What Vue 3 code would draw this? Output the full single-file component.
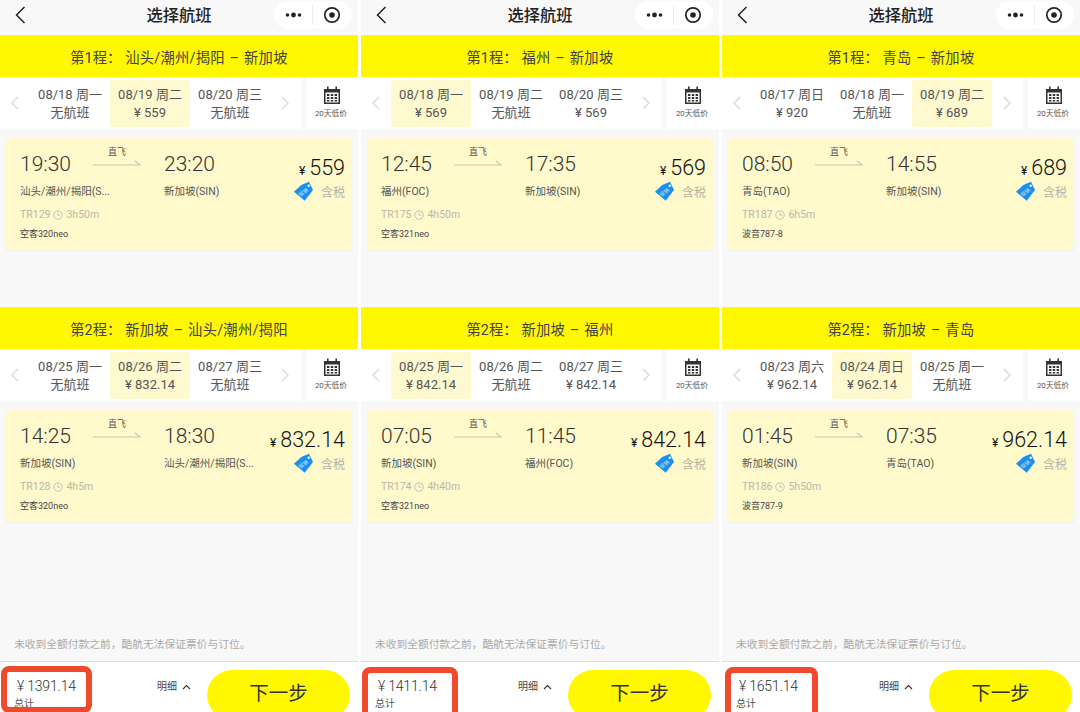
<script setup>
const phones = [
  {
    total: '1391.14', mark: { left: '1px', top: '4px', width: '91px', height: '47px' },
    legs: [
      { n: 1, route: '汕头/潮州/揭阳 – 新加坡', sel: 1,
        days: [['08/18 周一','无航班'],['08/19 周二','¥ 559'],['08/20 周三','无航班']],
        dep: '19:30', arr: '23:20', from: '汕头/潮州/揭阳(S...', to: '新加坡(SIN)', price: '559', fn: 'TR129', dur: '3h50m', plane: '空客320neo' },
      { n: 2, route: '新加坡 – 汕头/潮州/揭阳', sel: 1,
        days: [['08/25 周一','无航班'],['08/26 周二','¥ 832.14'],['08/27 周三','无航班']],
        dep: '14:25', arr: '18:30', from: '新加坡(SIN)', to: '汕头/潮州/揭阳(S...', price: '832.14', fn: 'TR128', dur: '4h5m', plane: '空客320neo' }
    ]
  },
  {
    total: '1411.14', mark: { left: '1px', top: '5px', width: '96px', height: '60px' },
    legs: [
      { n: 1, route: '福州 – 新加坡', sel: 0,
        days: [['08/18 周一','¥ 569'],['08/19 周二','无航班'],['08/20 周三','¥ 569']],
        dep: '12:45', arr: '17:35', from: '福州(FOC)', to: '新加坡(SIN)', price: '569', fn: 'TR175', dur: '4h50m', plane: '空客321neo' },
      { n: 2, route: '新加坡 – 福州', sel: 0,
        days: [['08/25 周一','¥ 842.14'],['08/26 周二','无航班'],['08/27 周三','¥ 842.14']],
        dep: '07:05', arr: '11:45', from: '新加坡(SIN)', to: '福州(FOC)', price: '842.14', fn: 'TR174', dur: '4h40m', plane: '空客321neo' }
    ]
  },
  {
    total: '1651.14', mark: { left: '3px', top: '5px', width: '93px', height: '60px' },
    legs: [
      { n: 1, route: '青岛 – 新加坡', sel: 2,
        days: [['08/17 周日','¥ 920'],['08/18 周一','无航班'],['08/19 周二','¥ 689']],
        dep: '08:50', arr: '14:55', from: '青岛(TAO)', to: '新加坡(SIN)', price: '689', fn: 'TR187', dur: '6h5m', plane: '波音787-8' },
      { n: 2, route: '新加坡 – 青岛', sel: 1,
        days: [['08/23 周六','¥ 962.14'],['08/24 周日','¥ 962.14'],['08/25 周一','无航班']],
        dep: '01:45', arr: '07:35', from: '新加坡(SIN)', to: '青岛(TAO)', price: '962.14', fn: 'TR186', dur: '5h50m', plane: '波音787-9' }
    ]
  }
]
</script>

<template>
  <div class="page">
    <div v-for="(p, pi) in phones" :key="pi" class="phone">
      <header class="nav">
        <svg class="back" width="12" height="20" viewBox="0 0 12 20"><path d="M10.500 2 2.500 10l8 8" fill="none" stroke="#222" stroke-width="1.500"/></svg>
        <div class="title">选择航班</div>
        <div class="capsule">
          <svg width="17" height="8" viewBox="0 0 17 8"><circle cx="2.500" cy="4" r="1.800" fill="#222"/><circle cx="8.500" cy="4" r="2.400" fill="#222"/><circle cx="14.500" cy="4" r="1.800" fill="#222"/></svg>
          <span class="cap-sep"></span>
          <svg width="18" height="18" viewBox="0 0 18 18"><circle cx="9" cy="9" r="7.200" fill="none" stroke="#222" stroke-width="1.700"/><circle cx="9" cy="9" r="2.800" fill="#222"/></svg>
        </div>
      </header>

      <section v-for="leg in p.legs" :key="leg.n" class="leg">
        <div class="banner"><span class="b-label">第{{ leg.n }}程：</span><span class="b-route">{{ leg.route }}</span></div>
        <div class="strip">
          <div class="dates">
            <svg class="chev" width="10" height="16" viewBox="0 0 10 16"><path d="M8 2 2 8l6 6" fill="none" stroke="#ddd" stroke-width="1.500"/></svg>
            <div class="day-row">
              <div v-for="(d, i) in leg.days" :key="i" class="day" :class="{ on: i === leg.sel }">
                <div>{{ d[0] }}</div>
                <div>{{ d[1] }}</div>
              </div>
            </div>
            <svg class="chev" width="10" height="16" viewBox="0 0 10 16"><path d="M2 2l6 6-6 6" fill="none" stroke="#ddd" stroke-width="1.500"/></svg>
          </div>
          <div class="cal">
            <svg width="18" height="18" viewBox="0 0 18 18">
              <path d="M1 3h16v15H1z" fill="#333"/>
              <rect x="4" y="0.500" width="1.600" height="4" fill="#333"/><rect x="12.400" y="0.500" width="1.600" height="4" fill="#333"/>
              <path d="M2.500 6.500h13v10h-13z" fill="#fff"/>
              <path d="M4 8h2.400v2H4zM7.800 8h2.400v2H7.800zM11.600 8H14v2h-2.400zM4 11h2.400v2H4zM7.800 11h2.400v2H7.800zM11.600 11H14v2h-2.400zM4 14h2.400v1.500H4zM7.800 14h2.400v1.500H7.800zM11.600 14H14v1.500h-2.400z" fill="#333"/>
            </svg>
            <div class="cal-t">20天低价</div>
          </div>
        </div>
        <div class="body">
          <div class="card">
            <div class="left">
              <div class="times">
                <span class="time dep">{{ leg.dep }}</span>
                <span class="direct">
                  <span class="direct-t">直飞</span>
                  <svg width="48" height="6" viewBox="0 0 48 6"><path d="M0 5h47L42 1" fill="none" stroke="#c9c6b4" stroke-width="1.200"/></svg>
                </span>
                <span class="time">{{ leg.arr }}</span>
              </div>
              <div class="cities"><span class="city">{{ leg.from }}</span><span class="city to">{{ leg.to }}</span></div>
              <div class="fn">
                {{ leg.fn }}
                <svg width="10" height="10" viewBox="0 0 9 9"><circle cx="4.500" cy="4.500" r="3.800" fill="none" stroke="#bbb" stroke-width=".8"/><path d="M4.500 2.300v2.400h1.800" fill="none" stroke="#bbb" stroke-width=".8"/></svg>
                {{ leg.dur }}
              </div>
              <div class="plane">{{ leg.plane }}</div>
            </div>
            <div class="right">
              <div class="price"><span class="yen">¥</span>{{ leg.price }}</div>
              <div class="tax">
                <svg width="19" height="20" viewBox="0 0 19 20">
                  <path d="M7.300 4 15 .7 19 9 10.700 19.700 0 10.700z" fill="#1a8fee"/>
                  <circle cx="14.700" cy="4.700" r="1.200" fill="#fff"/>
                  <text x="9.500" y="13" transform="rotate(-38 9.500 11.500)" text-anchor="middle" font-size="5" fill="#cfe8ff">促销</text>
                </svg>
                <span>含税</span>
              </div>
            </div>
          </div>
        </div>
      </section>

      <div class="note">未收到全额付款之前，酷航无法保证票价与订位。</div>

      <footer class="bar">
        <div class="sum">
          <div class="total">¥ {{ p.total }}</div>
          <div class="sum-l">总计</div>
        </div>
        <div class="detail">
          明细
          <svg width="9" height="6" viewBox="0 0 9 6"><path d="M1 5l3.500-3.500L8 5" fill="none" stroke="#333" stroke-width="1.100"/></svg>
        </div>
        <button class="next">下一步</button>
        <div class="mark" :style="p.mark"></div>
      </footer>
    </div>
  </div>
</template>

<style>
html, body { margin: 0; background: #fff; }
</style>

<style scoped>
.page {
  width: 1080px; height: 712px; overflow: hidden; display: flex; gap: 3px;
  font-family: "Roboto", "Noto Sans CJK SC", sans-serif; color: #333;
}
.phone {
  width: 358px; flex: none; height: 712px; background: #f8f8f8;
  display: flex; flex-direction: column; position: relative;
}
.nav { height: 35px; position: relative; display: flex; align-items: center; justify-content: center; }
.back { position: absolute; left: 14px; top: 5px; }
.title { font-size: 16.250px; font-weight: 500; color: #222; margin-top: -7px; }
.capsule {
  position: absolute; right: 6px; top: 1px; width: 78px; height: 28px; border-radius: 14px;
  background: #fff; display: flex; align-items: center; justify-content: space-between; padding: 0 11px; box-sizing: border-box;
}
.cap-sep { width: 1px; height: 20px; background: #eee; }
.leg { height: 272px; }
.banner {
  height: 42px; background: #fff800; display: flex; align-items: center; justify-content: center;
  font-size: 14.300px; color: #444;
}
.b-label { margin-right: 4px; }
.b-route { word-spacing: 1px; letter-spacing: .25px; }
.strip { height: 52px; display: flex; gap: 5px; }
.dates {
  flex: 1; background: #fff; display: flex; align-items: center; padding: 0 10px; box-sizing: border-box;
}
.day-row { display: flex; margin: 0 10px; }
.chev { flex: none; }
.day {
  width: 80px; height: 47px; border-radius: 3px; font-size: 13px; line-height: 18px; color: #555; padding-top: 1px; box-sizing: border-box;
  display: flex; flex-direction: column; align-items: center; justify-content: center; white-space: nowrap;
}
.day.on { background: #fff9cf; }
.cal {
  width: 52px; flex: none; background: #fff; display: flex; flex-direction: column; align-items: center; padding-top: 9px; box-sizing: border-box;
}
.cal-t { font-size: 7.800px; line-height: 11px; margin-top: 4px; margin-right: 2px; color: #555; white-space: nowrap; }
.body { padding: 9px 6px 0; }
.card {
  height: 112px; background: #fff9cb; border-radius: 4px; box-shadow: 0 1px 2px rgba(0,0,0,.05);
  display: flex; justify-content: space-between; padding: 0 7px 0 14px; box-sizing: border-box;
}
.left { flex: 1; min-width: 0; }
.times { display: flex; align-items: center; height: 26px; margin-top: 13px; }
.time { font-size: 21px; font-weight: 300; color: #333; }
.dep { width: 72px; }
.direct { width: 72px; position: relative; height: 26px; display: block; flex: none; }
.direct svg { position: absolute; left: 1px; top: 9px; }
.direct-t { position: absolute; left: 16px; top: -5px; font-size: 9px; line-height: 12px; color: #555; }
.cities { display: flex; font-size: 10.500px; line-height: 14px; margin-top: 8px; color: #555; }
.city { width: 144px; flex: none; white-space: nowrap; }
.fn { font-size: 10.500px; line-height: 14px; margin-top: 9px; color: #b9b8ab; display: flex; align-items: center; gap: 3px; }
.plane { font-size: 9px; line-height: 12px; margin-top: 6px; color: #444; }
.right { display: flex; flex-direction: column; align-items: flex-end; padding-top: 16px; }
.price { font-size: 21.500px; font-weight: 300; line-height: 27px; color: #111; white-space: nowrap; }
.yen { font-size: 12px; font-weight: 400; margin-right: 4px; }
.tax { display: flex; align-items: center; gap: 8px; font-size: 12px; color: #b5b4a8; margin-top: -4px; }
.note { position: absolute; left: 14px; top: 637px; font-size: 10.750px; line-height: 15px; color: #aaa; }
.bar {
  position: absolute; left: 0; right: 0; top: 661px; height: 51px; background: #fff; border-top: 1px solid #ddd; box-sizing: border-box; overflow: hidden;
}
.sum { position: absolute; left: 17px; top: 15px; }
.total { font-size: 14px; font-weight: 300; letter-spacing: -.2px; line-height: 18px; color: #333; }
.sum-l { font-size: 10px; line-height: 13px; margin-top: 2px; color: #555; margin-left: -3px; }
.detail { position: absolute; left: 157px; top: 18px; font-size: 10px; line-height: 14px; color: #444; display: flex; align-items: center; gap: 5px; }
.next {
  position: absolute; left: 207px; top: 8px; width: 143px; height: 50px; border: 0; border-radius: 25px; background: #fff800;
  font-family: inherit; font-size: 19.500px; color: #333; padding: 0 0 8px;
}
.mark {
  position: absolute; border: 6px solid #ef4a2b; border-radius: 8px; box-sizing: border-box;
}
</style>
